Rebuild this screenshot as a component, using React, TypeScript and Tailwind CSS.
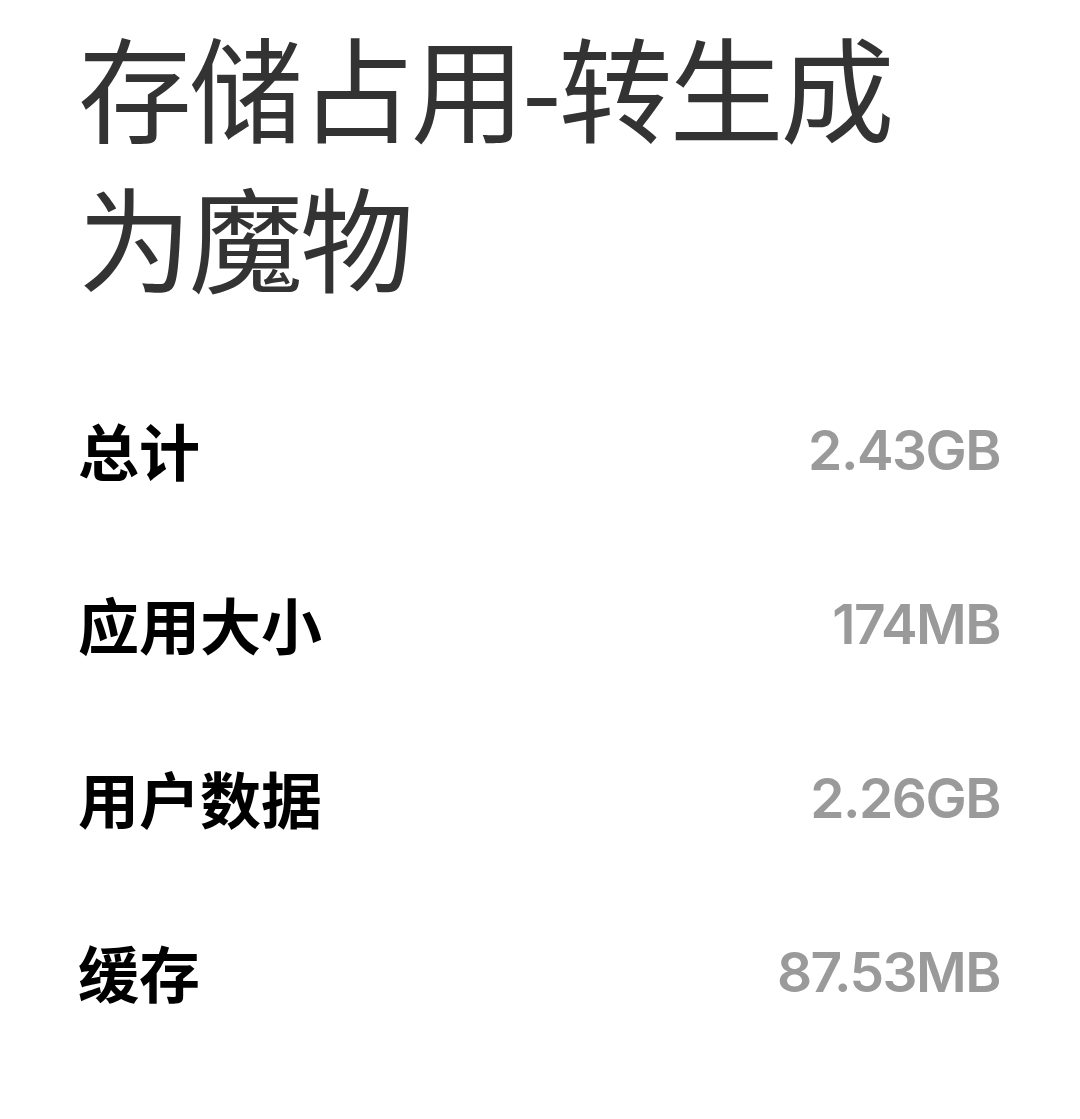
import React from 'react';

const rows = [
  { label: '总计', value: '2.43GB' },
  { label: '应用大小', value: '174MB' },
  { label: '用户数据', value: '2.26GB' },
  { label: '缓存', value: '87.53MB' },
];

export default function App() {
  return (
    <div className="min-h-[1119px] w-[1080px] bg-white px-[78px] pt-[10px] font-['Noto_Sans_CJK_SC',sans-serif]">
      <h1 className="max-w-[880px] text-[114px] font-normal leading-[150px] tracking-[-3px] text-[#333333]">
        存储占用-转生成为魔物
      </h1>
      <div className="mt-[53px] flex flex-col pr-[2px]">
        {rows.map((row) => (
          <div key={row.label} className="flex h-[174px] items-center justify-between">
            <span className="text-[61px] font-bold text-black">{row.label}</span>
            <span className="font-['Inter','Noto_Sans_CJK_SC',sans-serif] text-[55px] font-semibold tracking-[-1.5px] text-[#9a9a9a]">
              {row.value}
            </span>
          </div>
        ))}
      </div>
    </div>
  );
}
